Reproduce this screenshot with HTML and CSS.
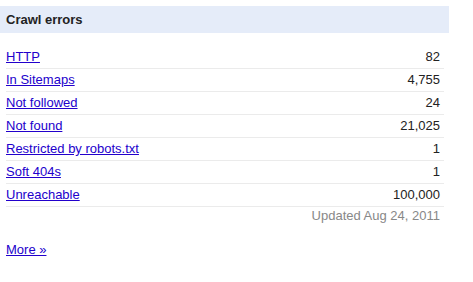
FILE: index.html
```html
<!DOCTYPE html>
<html lang="en">
<head>
    <meta charset="UTF-8">
    <meta name="viewport" content="width=device-width, initial-scale=1.0">
    <title>Crawl errors</title>
    <link rel="stylesheet" href="styles.css">
</head>
<body>
    <div class="box">
        <h2 class="box-title">Crawl errors</h2>

        <ul class="errors">
            <li><a href="#">HTTP</a><span>82</span></li>
            <li><a href="#">In Sitemaps</a><span>4,755</span></li>
            <li><a href="#">Not followed</a><span>24</span></li>
            <li><a href="#">Not found</a><span>21,025</span></li>
            <li><a href="#">Restricted by robots.txt</a><span>1</span></li>
            <li><a href="#">Soft 404s</a><span>1</span></li>
            <li><a href="#">Unreachable</a><span>100,000</span></li>
        </ul>

        <p class="updated">Updated Aug 24, 2011</p>

        <a class="more" href="#">More &raquo;</a>
    </div>
</body>
</html>
```

FILE: styles.css
```css
* {
    margin: 0;
    padding: 0;
    box-sizing: border-box;
}
body {
    background-color: #fff;
    font-family: Arial, "Liberation Sans", Helvetica, sans-serif;
    font-size: 13px;
    color: #222;
}
.box {
    width: 449px;
    padding-top: 6px;
}
.box-title {
    background-color: #e5ecf9;
    height: 27px;
    line-height: 27px;
    padding-left: 6px;
    font-size: 13px;
    font-weight: bold;
    color: #222;
}
.errors {
    list-style: none;
    margin: 13px 5px 0 6px;
}
.errors li {
    display: flex;
    justify-content: space-between;
    height: 23px;
    line-height: 22px;
    padding-right: 4px;
    border-bottom: 1px solid #ebebeb;
}
a {
    color: #2200cc;
}
.updated {
    text-align: right;
    color: #888;
    line-height: 17px;
    padding-right: 9px;
}
.more {
    display: inline-block;
    margin: 18px 0 0 6px;
    line-height: 15px;
}
```
